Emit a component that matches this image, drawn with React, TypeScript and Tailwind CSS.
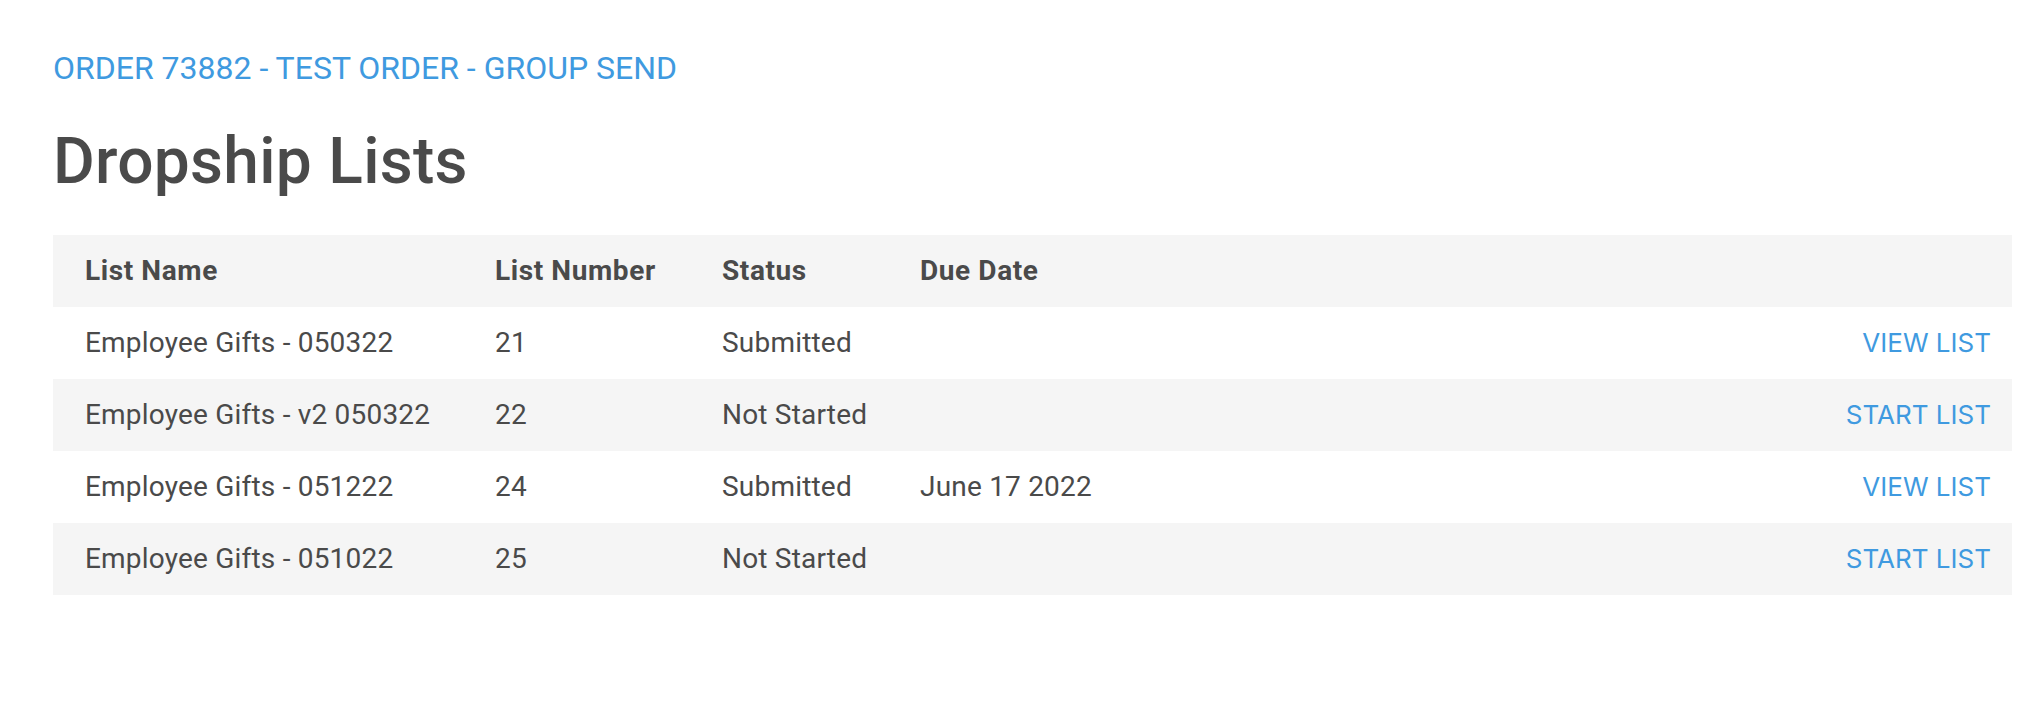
const rows = [
  { name: "Employee Gifts - 050322", number: "21", status: "Submitted", due: "", action: "VIEW LIST" },
  { name: "Employee Gifts - v2 050322", number: "22", status: "Not Started", due: "", action: "START LIST" },
  { name: "Employee Gifts - 051222", number: "24", status: "Submitted", due: "June 17 2022", action: "VIEW LIST" },
  { name: "Employee Gifts - 051022", number: "25", status: "Not Started", due: "", action: "START LIST" },
]

export default function App() {
  return (
    <div className="min-h-[710px] bg-white pl-[53px] pr-[20px] pt-[44px] font-['Roboto',sans-serif] text-[#4a4a4a]">
      <a href="#" className="block text-[32px] leading-[48px] text-[#3f9ae0]">
        ORDER 73882 - TEST ORDER - GROUP SEND
      </a>
      <h1 className="mt-[31px] text-[64px] leading-[77px] font-medium tracking-[0.3px] text-[#4a4a4a]">
        Dropship Lists
      </h1>

      <table className="mt-[35px] w-full border-collapse text-[28px] tracking-[0.2px]">
        <thead>
          <tr className="h-[72px] bg-[#f5f5f5] text-left">
            <th className="w-[442px] pl-[32px] font-bold tracking-[0.6px]">List Name</th>
            <th className="w-[227px] font-bold tracking-[0.6px]">List Number</th>
            <th className="w-[198px] font-bold tracking-[0.6px]">Status</th>
            <th className="font-bold tracking-[0.6px]">Due Date</th>
            <th />
          </tr>
        </thead>
        <tbody>
          {rows.map((r, i) => (
            <tr key={r.number} className={i % 2 === 1 ? "h-[72px] bg-[#f5f5f5]" : "h-[72px] bg-white"}>
              <td className="pl-[32px]">{r.name}</td>
              <td>{r.number}</td>
              <td>{r.status}</td>
              <td>{r.due}</td>
              <td className="pr-[21px] text-right">
                <a href="#" className="font-['Inter',sans-serif] text-[26px] tracking-normal text-[#3f9ae0]">
                  {r.action}
                </a>
              </td>
            </tr>
          ))}
        </tbody>
      </table>
    </div>
  )
}
